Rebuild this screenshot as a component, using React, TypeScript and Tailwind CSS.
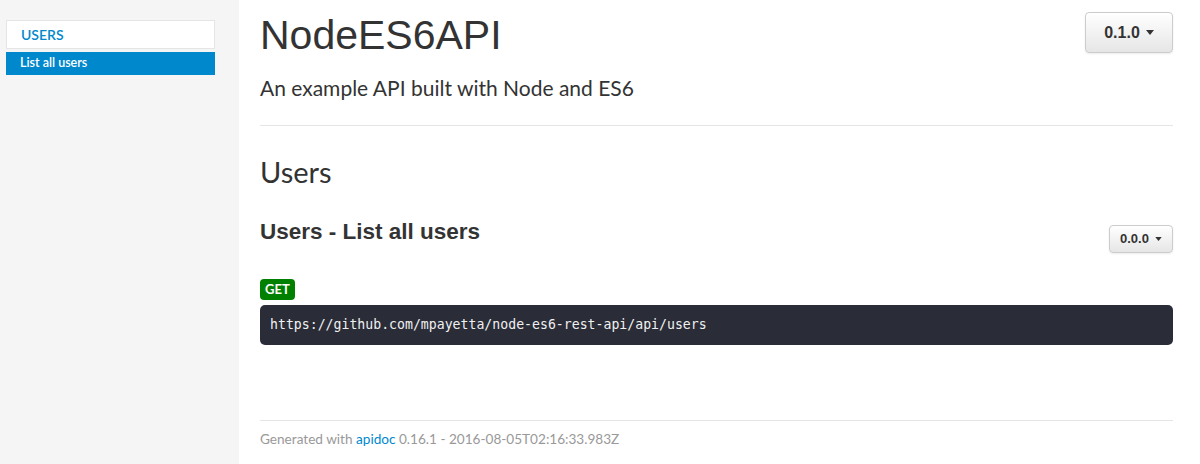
import React from "react";

// apidoc style page: sidebar nav + main content

const sans = "font-['Lato','Noto_Sans',sans-serif]";
const helv = "font-['Liberation_Sans','Arial',sans-serif]";

function VersionButton({ label, big }: { label: string; big?: boolean }) {
  return (
    <button
      type="button"
      className={
        helv +
        " flex items-center justify-center gap-[6px] rounded-[4px] border border-[#cccccc] bg-gradient-to-b from-white to-[#e6e6e6] font-bold text-[#333333] shadow-[0_1px_2px_rgba(0,0,0,0.08)] " +
        (big ? "h-[41px] w-[88px] text-[16px]" : "h-[28px] w-[64px] text-[13px]")
      }
    >
      {label}
      <svg width={big ? 8 : 7} height={big ? 5 : 4} viewBox="0 0 8 5">
        <path d="M0 0 L8 0 L4 5 Z" fill="#333333" />
      </svg>
    </button>
  );
}

export default function App() {
  return (
    <div className={sans + " flex min-h-[464px] w-full bg-white"}>
      <aside className="w-[239px] shrink-0 bg-[#f5f5f5] pt-[20px] pl-[6px]">
        <div className="w-[209px] border border-[#e5e5e5] bg-white pl-[14px] h-[29px] flex items-center text-[14px] font-semibold text-[#0088cc]">
          USERS
        </div>
        <div className="mt-[3px] w-[209px] h-[23px] flex items-center bg-[#0088cc] pl-[14px] text-[12.5px] font-semibold text-white">
          List all users
        </div>
      </aside>

      <main className="flex-1 pl-[21px] pr-[27px]">
        <div className="flex items-start justify-between">
          <div>
            <h1 className={helv + " mt-[12px] text-[41px] leading-[46px] text-[#333333]"}>
              NodeES6API
            </h1>
            <p className="mt-[18px] text-[21px] leading-[24px] text-[#333333]">
              An example API built with Node and ES6
            </p>
          </div>
          <div className="mt-[12px]">
            <VersionButton label="0.1.0" big />
          </div>
        </div>

        <div className="mt-[25px] border-t border-[#e5e5e5]" />

        <h2 className="mt-[28px] text-[29px] leading-[36px] text-[#333333]">Users</h2>

        <div className="mt-[28px] flex items-start justify-between">
          <h3 className={helv + " text-[22.5px] font-bold leading-[28px] text-[#333333]"}>
            Users - List all users
          </h3>
          <div className="mt-[7px]">
            <VersionButton label="0.0.0" />
          </div>
        </div>

        <div className="mt-[26px] inline-flex h-[21px] items-center rounded-[4px] bg-[#008000] px-[5px] text-[13px] font-bold text-white">
          GET
        </div>

        <div className="mt-[5px] flex h-[40px] items-center rounded-[5px] bg-[#2a2c38] pl-[10px] font-['DejaVu_Sans_Mono',monospace] text-[13.2px] text-[#f0f0f0]">
          https://github.com/mpayetta/node-es6-rest-api/api/users
        </div>

        <div className="mt-[75px] border-t border-[#e5e5e5]" />

        <p className="mt-[8px] text-[13.6px] text-[#999999]">
          Generated with <a className="text-[#0088cc]">apidoc</a> 0.16.1 - 2016-08-05T02:16:33.983Z
        </p>
      </main>
    </div>
  );
}
